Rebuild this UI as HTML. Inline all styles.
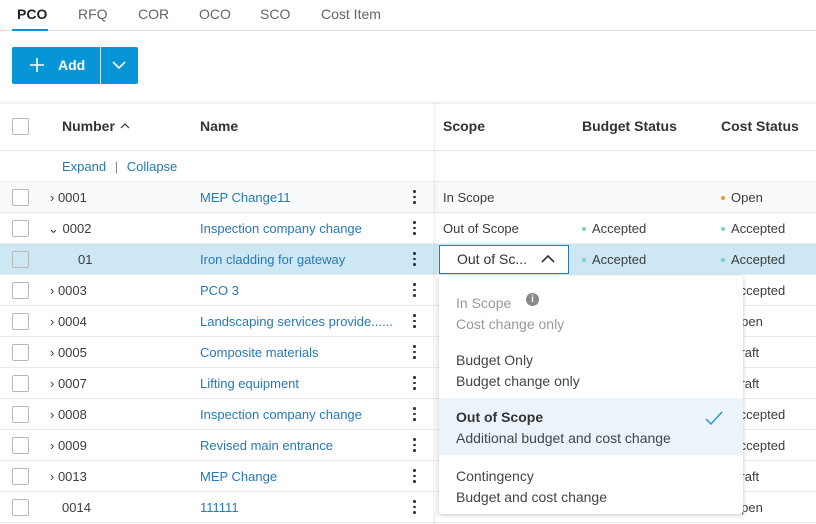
<!DOCTYPE html>
<html><head><meta charset="utf-8"><style>
*{box-sizing:border-box;margin:0;padding:0}
body{width:816px;height:524px;overflow:hidden;background:#fff;font-family:"Liberation Sans",sans-serif;color:#3c3c3c;position:relative;font-size:13px}
.a{position:absolute;white-space:nowrap}
.tab{position:absolute;top:6px;font-size:14px;color:#666}
.row{position:absolute;left:0;width:816px;height:31px;border-bottom:1px solid #ebebeb}
.row .t{position:absolute;top:8px;line-height:16px}
.cb{position:absolute;left:12px;top:7px;width:17px;height:17px;border:1px solid #b8b8b8;border-radius:2px;background:#fff}
.lk{color:#2779b5}
.kb{position:absolute;left:413px;top:8px;width:3px;height:15px}
.kb i{display:block;width:2.5px;height:2.5px;background:#333;border-radius:50%;margin-bottom:3px}
.dot{display:inline-block;width:4px;height:4px;border-radius:50%;margin-right:6px;vertical-align:middle;position:relative;top:-1px}
.g{background:#7fcfc7}.o{background:#f39a1b}
.hd{font-weight:bold;font-size:14px;color:#333}
</style></head><body>
<div class="tab" style="left:17px;color:#222;font-weight:bold">PCO</div>
<div class="tab" style="left:78px">RFQ</div>
<div class="tab" style="left:138px">COR</div>
<div class="tab" style="left:199px">OCO</div>
<div class="tab" style="left:260px">SCO</div>
<div class="tab" style="left:321px">Cost Item</div>
<div class="a" style="left:0;top:30px;width:816px;height:1px;background:#e2e2e2"></div>
<div class="a" style="left:12px;top:29px;width:36px;height:2px;background:#0696d7"></div>

<div class="a" style="left:12px;top:47px;width:126px;height:37px;background:#0696d7;border-radius:2px"></div>
<div class="a" style="left:100px;top:47px;width:1px;height:37px;background:#fff;opacity:.8"></div>
<svg class="a" style="left:29px;top:57px" width="16" height="16"><path d="M8 1v14M1 8h14" stroke="#fff" stroke-width="1.6"/></svg>
<div class="a" style="left:58px;top:57px;color:#fff;font-weight:bold;font-size:14px">Add</div>
<svg class="a" style="left:112px;top:61px" width="14" height="9"><path d="M1 1l6 6 6-6" stroke="#fff" stroke-width="1.6" fill="none"/></svg>

<div class="a" style="left:0;top:100px;width:816px;height:4px;background:linear-gradient(#fff,#eee)"></div>
<div class="a" style="left:0;top:150px;width:816px;height:1px;background:#ebebeb"></div>
<div class="a" style="left:0;top:181px;width:816px;height:1px;background:#ebebeb"></div>
<div class="cb" style="top:118px"></div>
<div class="a hd" style="left:62px;top:118px">Number</div>
<svg class="a" style="left:120px;top:122px" width="10" height="7"><path d="M1 6l4-4 4 4" stroke="#333" stroke-width="1.2" fill="none"/></svg>
<div class="a hd" style="left:200px;top:118px">Name</div>
<div class="a hd" style="left:443px;top:118px">Scope</div>
<div class="a hd" style="left:582px;top:118px">Budget Status</div>
<div class="a hd" style="left:721px;top:118px">Cost Status</div>
<div class="a" style="left:62px;top:159px;color:#2779b5">Expand <span style="color:#888;margin:0 5px">|</span> Collapse</div>

<div class="row" style="top:182px;background:#f8fafb"><div class="cb"></div><div class="t" style="left:50px">›&nbsp;0001</div><div class="t lk" style="left:200px">MEP Change11</div><div class="kb"><i></i><i></i><i></i></div><div class="t" style="left:443px">In Scope</div><div class="t" style="left:721px"><span class="dot o"></span>Open</div></div>
<div class="row" style="top:213px"><div class="cb"></div><div class="t" style="left:48px">⌄&nbsp;0002</div><div class="t lk" style="left:200px">Inspection company change</div><div class="kb"><i></i><i></i><i></i></div><div class="t" style="left:443px">Out of Scope</div><div class="t" style="left:582px"><span class="dot g"></span>Accepted</div><div class="t" style="left:721px"><span class="dot g"></span>Accepted</div></div>
<div class="row" style="top:244px;background:#cde8f4"><div class="cb" style="background:#cde8f4"></div><div class="t" style="left:78px">01</div><div class="t lk" style="left:200px">Iron cladding for gateway</div><div class="kb"><i></i><i></i><i></i></div><div class="t" style="left:582px"><span class="dot g"></span>Accepted</div><div class="t" style="left:721px"><span class="dot g"></span>Accepted</div></div>
<div class="row" style="top:275px"><div class="cb"></div><div class="t" style="left:50px">›&nbsp;0003</div><div class="t lk" style="left:200px">PCO 3</div><div class="kb"><i></i><i></i><i></i></div><div class="t" style="left:721px"><span class="dot g"></span>Accepted</div></div>
<div class="row" style="top:306px"><div class="cb"></div><div class="t" style="left:50px">›&nbsp;0004</div><div class="t lk" style="left:200px">Landscaping services provide......</div><div class="kb"><i></i><i></i><i></i></div><div class="t" style="left:721px"><span class="dot o"></span>Open</div></div>
<div class="row" style="top:337px"><div class="cb"></div><div class="t" style="left:50px">›&nbsp;0005</div><div class="t lk" style="left:200px">Composite materials</div><div class="kb"><i></i><i></i><i></i></div><div class="t" style="left:721px"><span class="dot g"></span>Draft</div></div>
<div class="row" style="top:368px"><div class="cb"></div><div class="t" style="left:50px">›&nbsp;0007</div><div class="t lk" style="left:200px">Lifting equipment</div><div class="kb"><i></i><i></i><i></i></div><div class="t" style="left:721px"><span class="dot g"></span>Draft</div></div>
<div class="row" style="top:399px"><div class="cb"></div><div class="t" style="left:50px">›&nbsp;0008</div><div class="t lk" style="left:200px">Inspection company change</div><div class="kb"><i></i><i></i><i></i></div><div class="t" style="left:721px"><span class="dot g"></span>Accepted</div></div>
<div class="row" style="top:430px"><div class="cb"></div><div class="t" style="left:50px">›&nbsp;0009</div><div class="t lk" style="left:200px">Revised main entrance</div><div class="kb"><i></i><i></i><i></i></div><div class="t" style="left:721px"><span class="dot g"></span>Accepted</div></div>
<div class="row" style="top:461px"><div class="cb"></div><div class="t" style="left:50px">›&nbsp;0013</div><div class="t lk" style="left:200px">MEP Change</div><div class="kb"><i></i><i></i><i></i></div><div class="t" style="left:721px"><span class="dot g"></span>Draft</div></div>
<div class="row" style="top:492px"><div class="cb"></div><div class="t" style="left:62px">0014</div><div class="t lk" style="left:200px">111111</div><div class="kb"><i></i><i></i><i></i></div><div class="t" style="left:721px"><span class="dot o"></span>Open</div></div>

<div class="a" style="left:433px;top:102px;width:6px;height:422px;background:linear-gradient(90deg,rgba(0,0,0,.05),rgba(0,0,0,0))"></div>

<div class="a" style="left:439px;top:245px;width:130px;height:29px;border:1.5px solid #2779b5;background:#fff"></div>
<div class="a" style="left:457px;top:251px;font-size:14px;color:#333">Out of Sc...</div>
<svg class="a" style="left:541px;top:254px" width="14" height="9"><path d="M1 8l6-6 6 6" stroke="#333" stroke-width="1.6" fill="none"/></svg>

<div class="a" style="left:439px;top:276px;width:304px;height:238px;background:#fff;border-radius:3px;box-shadow:0 1px 5px rgba(0,0,0,.22)"></div>
<div class="a" style="left:439px;top:398px;width:304px;height:57px;background:#eaf4fa"></div>
<div class="a" style="left:456px;top:293px;font-size:14px;color:#999;line-height:21px">In Scope<br>Cost change only</div>
<div class="a" style="left:526px;top:293px;width:13px;height:13px;border-radius:50%;background:#888;color:#fff;font-size:10px;font-weight:bold;text-align:center;line-height:13px">i</div>
<div class="a" style="left:456px;top:350px;font-size:14px;color:#444;line-height:21px">Budget Only<br>Budget change only</div>
<div class="a" style="left:456px;top:407px;font-size:14px;color:#444;line-height:21px"><b style="color:#333">Out of Scope</b><br>Additional budget and cost change</div>
<svg class="a" style="left:705px;top:411px" width="18" height="14"><path d="M1 8l5 5 11-12" stroke="#2a9ad8" stroke-width="1.5" fill="none"/></svg>
<div class="a" style="left:456px;top:466px;font-size:14px;color:#444;line-height:21px">Contingency<br>Budget and cost change</div>
</body></html>
